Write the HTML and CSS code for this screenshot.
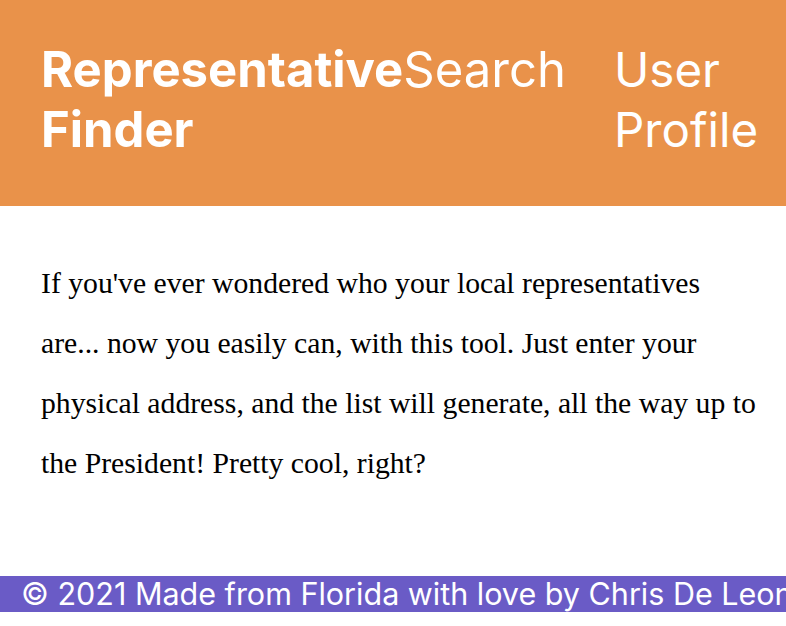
FILE: index.html
```html
<!DOCTYPE html>
<html lang="en">
<head>
<meta charset="utf-8">
<title>Representative Search Finder</title>
<link rel="stylesheet" href="styles.css">
</head>
<body>
<header class="site-header">
  <h1 class="brand"><span class="brand-strong">Representative</span>Search <span class="brand-strong">Finder</span></h1>
  <nav class="nav"><a class="nav-link" href="#">User Profile</a></nav>
</header>
<main class="content">
  <p class="intro">If you've ever wondered who your local representatives are... now you easily can, with this tool. Just enter your physical address, and the list will generate, all the way up to the President! Pretty cool, right?</p>
</main>
<footer class="site-footer">© 2021 Made from Florida with love by Chris De Leon</footer>
</body>
</html>
```

FILE: styles.css
```css
html, body {
  margin: 0;
  padding: 0;
  background: #ffffff;
}

body {
  overflow: hidden;
}

.site-header {
  background: #e9924a;
  display: flex;
  justify-content: space-between;
  align-items: flex-start;
  padding: 40px 30px 46px 41px;
  font-family: Inter, "Noto Sans", sans-serif;
  color: #ffffff;
}

.brand {
  margin: 0;
  font-size: 49px;
  line-height: 60px;
  font-weight: 400;
  width: 545px;
}

.brand-strong {
  font-weight: 700;
}

.nav {
  width: 142px;
}

.nav-link {
  display: block;
  color: #ffffff;
  text-decoration: none;
  font-size: 47.5px;
  line-height: 60px;
  font-weight: 400;
}

.content {
  padding: 0 14px 0 41px;
}

.intro {
  margin: 47px 0 0;
  font-family: "Liberation Serif", "Times New Roman", serif;
  font-size: 29.7px;
  line-height: 60px;
  color: #000000;
  max-width: 724px;
}

.site-footer {
  margin-top: 83px;
  height: 36px;
  line-height: 36px;
  background: #6a5bc6;
  color: #ffffff;
  font-family: Inter, "Noto Sans", sans-serif;
  font-size: 30.5px;
  padding-left: 21px;
  white-space: nowrap;
  overflow: hidden;
}
```
